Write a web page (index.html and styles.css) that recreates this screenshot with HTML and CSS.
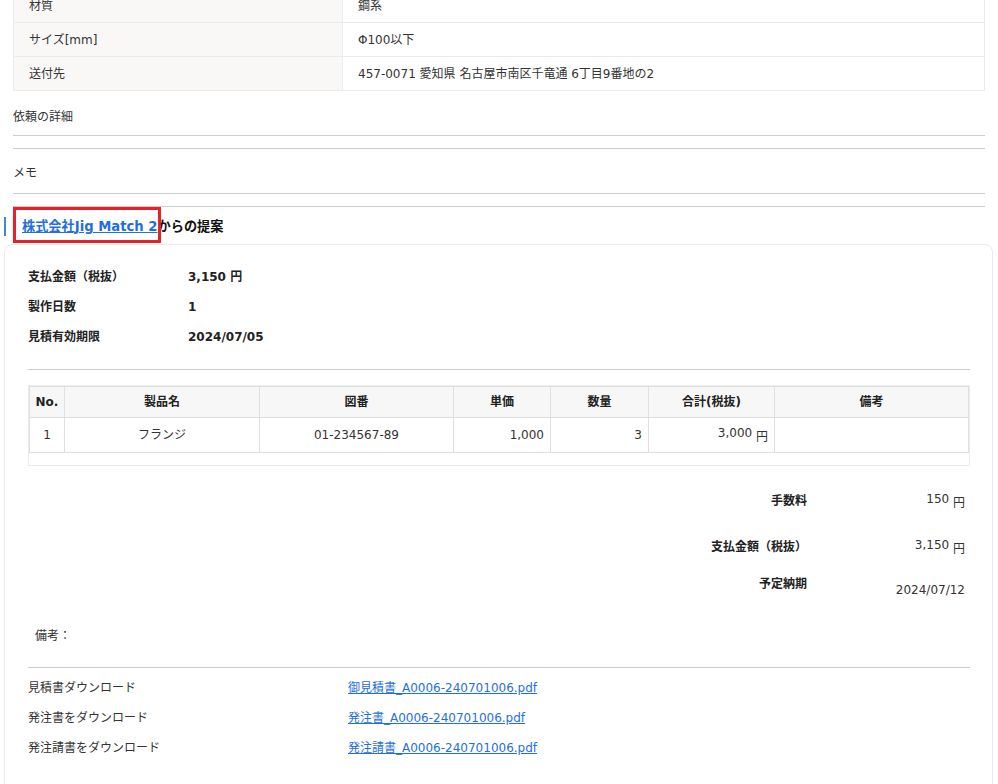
FILE: index.html
```html
<!DOCTYPE html>
<html lang="ja">
<head>
<meta charset="utf-8">
<title>提案</title>
<link rel="stylesheet" href="styles.css">
</head>
<body>
<div class="page">
  <table class="spec">
    <tr><th>材質</th><td>鋼系</td></tr>
    <tr><th>サイズ[mm]</th><td>Φ100以下</td></tr>
    <tr><th>送付先</th><td>457-0071 愛知県 名古屋市南区千竜通 6丁目9番地の2</td></tr>
  </table>
  <div class="sec sec-detail">依頼の詳細</div>
  <div class="sec sec-memo">メモ</div>
  <div class="sec-line"></div>
</div>

<div class="proposal">
  <h2 class="ph-title"><a href="#" class="ph-link">株式会社Jig Match 2</a>からの提案<span class="mark"></span></h2>

  <div class="card">
    <div class="summary">
      <div class="s-label">支払金額（税抜）</div><div class="s-value">3,150 円</div>
      <div class="s-label">製作日数</div><div class="s-value">1</div>
      <div class="s-label">見積有効期限</div><div class="s-value">2024/07/05</div>
    </div>

    <hr class="rule rule-summary">

    <div class="items-wrap">
      <table class="items">
        <colgroup>
          <col class="c-no"><col class="c-name"><col class="c-draw"><col class="c-unit"><col class="c-qty"><col class="c-total"><col>
        </colgroup>
        <thead>
          <tr><th>No.</th><th>製品名</th><th>図番</th><th>単価</th><th>数量</th><th>合計(税抜)</th><th>備考</th></tr>
        </thead>
        <tbody>
          <tr>
            <td class="center">1</td>
            <td class="center">フランジ</td>
            <td class="center">01-234567-89</td>
            <td class="num">1,000</td>
            <td class="num">3</td>
            <td class="num"><span class="amt">3,000</span> <span class="yen">円</span></td>
            <td></td>
          </tr>
        </tbody>
      </table>
    </div>

    <div class="totals">
      <div class="t-row t-fee"><div class="t-label">手数料</div><div class="t-value"><span class="amt">150</span> <span class="yen">円</span></div></div>
      <div class="t-row t-pay"><div class="t-label">支払金額（税抜）</div><div class="t-value"><span class="amt">3,150</span> <span class="yen">円</span></div></div>
      <div class="t-row t-date"><div class="t-label">予定納期</div><div class="t-value t-date-value">2024/07/12</div></div>
    </div>

    <div class="remark">備考：</div>

    <hr class="rule rule-dl">

    <div class="downloads">
      <div class="d-label">見積書ダウンロード</div><div class="d-link"><a href="#">御見積書_A0006-240701006.pdf</a></div>
      <div class="d-label">発注書をダウンロード</div><div class="d-link"><a href="#">発注書_A0006-240701006.pdf</a></div>
      <div class="d-label">発注請書をダウンロード</div><div class="d-link"><a href="#">発注請書_A0006-240701006.pdf</a></div>
    </div>
  </div>
</div>
</body>
</html>
```

FILE: styles.css
```css
html, body {
  margin: 0;
  padding: 0;
  overflow: hidden;
  background: #fff;
}

body {
  font-family: "DejaVu Sans", "Noto Sans CJK JP", sans-serif;
  font-size: 12px;
  line-height: 18px;
  color: #333;
}

.page {
  padding: 0 13px;
}

/* spec table */
.spec {
  width: 100%;
  margin-top: -12px;
  border-collapse: collapse;
  border: 1px solid #e6e6e6;
}

.spec th,
.spec td {
  border: 1px solid #ebebeb;
  padding: 8px 15px 7px;
  text-align: left;
  font-weight: normal;
}

.spec th {
  width: 298px;
  background: #f9f8f7;
}

/* sections */
.sec-detail {
  padding: 17px 0 9px;
  border-bottom: 1px solid #ccc;
}

.sec-memo {
  margin-top: 12px;
  padding: 15px 0 11px;
  border-top: 1px solid #ccc;
  border-bottom: 1px solid #ccc;
}

.sec-line {
  margin-top: 12px;
  border-top: 1px solid #ccc;
}

/* proposal */
.proposal {
  padding: 0 5px 0 4px;
}

.ph-title {
  position: relative;
  margin: 10px 0 8px;
  padding-left: 16px;
  border-left: 2px solid #3a8ccc;
  font-size: 13.2px;
  line-height: 19px;
  font-weight: bold;
  color: #111;
}

.ph-link {
  color: #1f6fe0;
  text-decoration: underline;
}

.mark {
  position: absolute;
  left: 7px;
  top: -10px;
  width: 148px;
  height: 36px;
  box-sizing: border-box;
  border: 3px solid #e5222b;
  pointer-events: none;
}

.card {
  border: 1px solid #ebebeb;
  border-radius: 8px;
  padding: 17px 22px 40px 23px;
}

.summary {
  display: grid;
  grid-template-columns: 160px 1fr;
  grid-auto-rows: 30px;
  align-items: center;
  font-weight: bold;
  color: #222;
}

.rule {
  border: 0;
  border-top: 1px solid #ccc;
  margin: 0;
}

.rule-summary {
  margin-top: 17px;
}

.items-wrap {
  margin-top: 15px;
  border: 1px solid #ececec;
  padding-bottom: 12px;
}

.items {
  width: 100%;
  border-collapse: collapse;
  border: 1px solid #dedede;
  table-layout: fixed;
}

.c-no { width: 35px; }
.c-name { width: 195px; }
.c-draw { width: 194px; }
.c-unit { width: 97px; }
.c-qty { width: 98px; }
.c-total { width: 126px; }

.items th,
.items td {
  border: 1px solid #dfdfdf;
}

.items th {
  background: #f7f7f7;
  font-weight: bold;
  color: #222;
  padding: 6px 4px;
  text-align: center;
}

.items td {
  padding: 8px 6px;
}

.items .center {
  text-align: center;
}

.items .num {
  text-align: right;
}

.amt {
  position: relative;
  top: -2px;
}

.yen {
  position: relative;
  top: 2px;
}

/* totals */
.totals {
  margin-top: 26px;
}

.t-row {
  display: grid;
  grid-template-columns: 1fr 163px;
  align-items: start;
}

.t-label {
  text-align: right;
  font-weight: bold;
  color: #222;
}

.t-value {
  text-align: right;
  padding-right: 5px;
}

.t-fee {
  margin-bottom: 28px;
}

.t-pay {
  margin-bottom: 19px;
}

.t-date-value {
  padding-top: 6px;
}

.remark {
  margin-top: 28px;
  padding-left: 7px;
}

.rule-dl {
  margin-top: 22px;
}

.downloads {
  margin-top: 5px;
  display: grid;
  grid-template-columns: 320px 1fr;
  grid-auto-rows: 30px;
  align-items: center;
}

.d-link a {
  color: #1f6fe0;
  text-decoration: underline;
}
```
